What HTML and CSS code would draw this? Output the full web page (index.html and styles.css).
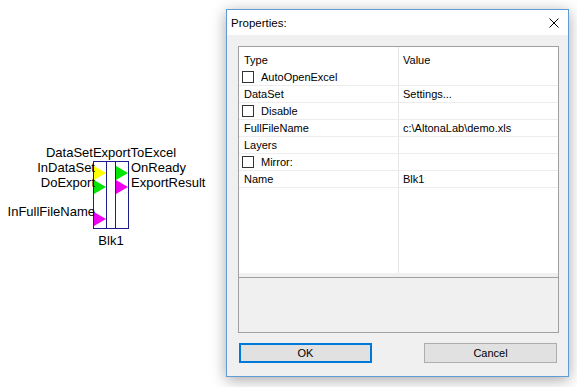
FILE: index.html
```html
<!DOCTYPE html>
<html lang="en">
<head>
  <meta charset="UTF-8">
  <title>DataSetExportToExcel - Properties</title>
  <link rel="stylesheet" href="styles.css">
</head>
<body>
  <div class="desktop">

    <!-- Diagram block -->
    <div class="block">
      <div class="block-title">DataSetExportToExcel</div>
      <div class="port-label in in1">InDataSet</div>
      <div class="port-label in in2">DoExport</div>
      <div class="port-label in in3">InFullFileName</div>
      <div class="port-label out out1">OnReady</div>
      <div class="port-label out out2">ExportResult</div>
      <div class="block-col col-in">
        <span class="tri yellow"></span>
        <span class="tri green"></span>
        <span class="tri magenta low"></span>
      </div>
      <div class="block-col col-mid"></div>
      <div class="block-col col-out">
        <span class="tri green"></span>
        <span class="tri magenta"></span>
      </div>
      <div class="block-name">Blk1</div>
    </div>

    <!-- Properties dialog -->
    <div class="dialog">
      <div class="titlebar">
        <span class="title">Properties:</span>
        <svg class="close" width="10" height="10" viewBox="0 0 10 10">
          <path d="M0.5 0.5 L9.5 9.5 M9.5 0.5 L0.5 9.5" stroke="#000" stroke-width="1" fill="none"/>
        </svg>
      </div>
      <div class="dialog-body">
        <div class="propgrid">
          <div class="grid-list">
            <div class="row head">
              <div class="cell name">Type</div>
              <div class="cell value">Value</div>
            </div>
            <div class="row">
              <div class="cell name check"><span class="box"></span>AutoOpenExcel</div>
              <div class="cell value"></div>
            </div>
            <div class="row">
              <div class="cell name">DataSet</div>
              <div class="cell value">Settings...</div>
            </div>
            <div class="row">
              <div class="cell name check"><span class="box"></span>Disable</div>
              <div class="cell value"></div>
            </div>
            <div class="row">
              <div class="cell name">FullFileName</div>
              <div class="cell value">c:\AltonaLab\demo.xls</div>
            </div>
            <div class="row">
              <div class="cell name">Layers</div>
              <div class="cell value"></div>
            </div>
            <div class="row">
              <div class="cell name check"><span class="box"></span>Mirror:</div>
              <div class="cell value"></div>
            </div>
            <div class="row">
              <div class="cell name">Name</div>
              <div class="cell value">Blk1</div>
            </div>
          </div>
          <div class="grid-gap"></div>
          <div class="grid-desc"></div>
        </div>
        <div class="buttons">
          <button class="btn btn-default">OK</button>
          <button class="btn">Cancel</button>
        </div>
      </div>
    </div>

  </div>
</body>
</html>
```

FILE: styles.css
```css
body {
  margin: 0;
  background: #fff;
  font-family: "Liberation Sans", Arial, sans-serif;
  overflow: hidden;
}

.desktop {
  position: relative;
  width: 577px;
  height: 387px;
}

/* ---- diagram block ---- */

.block {
  position: absolute;
  left: 93px;
  top: 161px;
  display: flex;
  height: 66px;
  border: 1px solid #1c1c8a;
  font-size: 13px;
  color: #000;
}

.block-col {
  display: flex;
  flex-direction: column;
}

.col-in {
  width: 12px;
  padding-top: 4px;
  border-right: 1px solid #1c1c8a;
}

.col-mid {
  width: 8px;
  border-right: 1px solid #1c1c8a;
}

.col-out {
  width: 12px;
  padding-top: 4px;
}

.tri {
  width: 0;
  height: 0;
  border-top: 7px solid transparent;
  border-bottom: 7px solid transparent;
  border-left: 12px solid;
}

.tri.yellow { border-left-color: #ffff00; }
.tri.green { border-left-color: #00e600; }
.tri.magenta { border-left-color: #f000f0; }
.tri.low { margin-top: 18px; }

.block-title,
.block-name,
.port-label {
  position: absolute;
  line-height: 15px;
  white-space: nowrap;
}

.block-title {
  top: -17px;
  left: 50%;
  transform: translateX(-50%);
}

.block-name {
  top: 71px;
  left: 50%;
  transform: translateX(-50%);
}

.port-label.in { right: calc(100% - 1px); }
.port-label.out { left: calc(100% + 3px); }

.in1, .out1 { top: -2px; }
.in2, .out2 { top: 13px; }
.in3 { top: 42px; }

/* ---- dialog ---- */

.dialog {
  position: absolute;
  left: 226px;
  top: 9px;
  width: 341px;
  height: 366px;
  border: 1px solid #5f9bd4;
  background: #f0f0f0;
  box-shadow: 0 3px 14px rgba(0, 0, 0, 0.35);
  display: flex;
  flex-direction: column;
  font-size: 11px;
  color: #000;
}

.titlebar {
  height: 25px;
  background: #fff;
  display: flex;
  align-items: center;
  justify-content: space-between;
  padding: 0 9px 0 4px;
}

.title {
  font-size: 11.5px;
}

.dialog-body {
  flex: 1;
  padding: 11px 9px 12px 11px;
  display: flex;
  flex-direction: column;
}

.propgrid {
  height: 285px;
  border: 1px solid #a0a0a0;
  display: flex;
  flex-direction: column;
}

.grid-list {
  height: 221px;
  padding-top: 5px;
  background: linear-gradient(to right, transparent 159px, #e6e6e6 159px, #e6e6e6 160px, transparent 160px) #fff;
}

.grid-gap {
  height: 4px;
}

.grid-desc {
  flex: 1;
  border-top: 1px solid #a0a0a0;
}

.row {
  display: grid;
  grid-template-columns: 160px 1fr;
  height: 16px;
  line-height: 16px;
  border-bottom: 1px solid #ececec;
}

.row.head {
  height: 17px;
  line-height: 17px;
  border-bottom: none;
}

.cell.name {
  padding-left: 5px;
}

.cell.value {
  padding-left: 4px;
}

.cell.check {
  display: flex;
  align-items: center;
  padding-left: 3px;
}

.box {
  width: 10px;
  height: 10px;
  border: 1px solid #333;
  background: #fff;
  margin-right: 7px;
}

.buttons {
  display: flex;
  justify-content: space-between;
  margin-top: 10px;
  padding: 0 2px 0 1px;
}

.btn {
  width: 133px;
  height: 20px;
  box-sizing: border-box;
  background: #e1e1e1;
  border: 1px solid #adadad;
  font-family: "Liberation Sans", Arial, sans-serif;
  font-size: 11px;
  color: #000;
  padding: 0;
}

.btn-default {
  border: 2px solid #0078d7;
}
```
